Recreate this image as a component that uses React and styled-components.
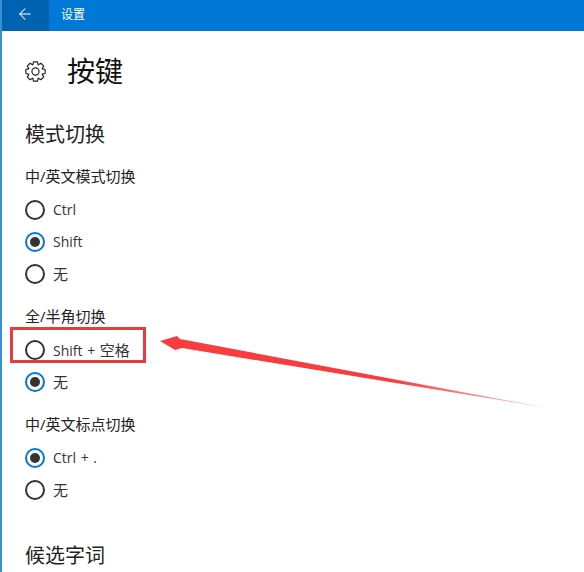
import styled, { createGlobalStyle } from "styled-components";
import { ArrowLeft } from "lucide-react";

const GlobalStyle = createGlobalStyle`
  html, body {
    margin: 0;
    height: 100%;
    overflow: hidden;
    background: #fff;
  }
`;

const Window = styled.div`
  position: relative;
  width: 584px;
  height: 572px;
  box-sizing: border-box;
  border-left: 2px solid #3a8fd1;
  overflow: hidden;
  font-family: "Open Sans", "Noto Sans CJK SC", sans-serif;
  color: #1a1a1a;
  background: #fff;
`;

const TitleBar = styled.header`
  display: flex;
  align-items: center;
  height: 31px;
  margin-left: -2px;
  background: #0078d7;
  color: #fff;
`;

const BackButton = styled.div`
  display: flex;
  align-items: center;
  justify-content: center;
  width: 49px;
  height: 100%;
  padding-bottom: 3px;
  box-sizing: border-box;
  background: #0063b1;
`;

const AppName = styled.span`
  margin-left: 12px;
  padding-bottom: 3px;
  font-size: 12px;
`;

const Content = styled.main`
  padding: 0 0 0 23px;
`;

const PageHeader = styled.div`
  display: flex;
  align-items: center;
  height: 40px;
  margin-top: 20px;
  gap: 21px;
`;

const PageTitle = styled.h1`
  margin: 0;
  font-size: 28px;
  font-weight: 400;
  line-height: 40px;
  color: #111;
`;

const SectionTitle = styled.h2`
  margin: ${(p) => p.$top}px 0 0;
  font-size: 20px;
  font-weight: 400;
  line-height: 26px;
  color: #222;
`;

const Group = styled.div`
  margin-top: ${(p) => p.$top}px;
`;

const GroupLabel = styled.div`
  font-size: 15px;
  line-height: 20px;
  margin-bottom: 8px;
  color: #222;
`;

const Row = styled.label`
  position: relative;
  display: flex;
  align-items: center;
  gap: 8px;
  height: 32px;
  font-size: 14px;
  word-spacing: 1px;
  color: #333;
`;

const RowText = styled.span`
  padding-bottom: 2px;
`;

const Cjk = styled.span`
  font-size: 15px;
`;

const Radio = styled.span`
  box-sizing: border-box;
  display: flex;
  align-items: center;
  justify-content: center;
  width: 20px;
  height: 20px;
  border-radius: 50%;
  border: 2px solid ${(p) => (p.$checked ? "#0078d7" : "#333")};

  &::after {
    content: "";
    display: ${(p) => (p.$checked ? "block" : "none")};
    width: 10px;
    height: 10px;
    border-radius: 50%;
    background: #333;
  }
`;

const Highlight = styled.span`
  position: absolute;
  left: -15px;
  top: -7px;
  width: 136px;
  height: 36px;
  box-sizing: border-box;
  border: 3px solid #ea3a3f;
`;

const ArrowOverlay = styled.svg`
  position: absolute;
  left: -2px;
  top: 0;
  pointer-events: none;
`;

// 8-tooth outline like the Windows settings gear
function gearPath() {
  const pts = [];
  for (let i = 0; i < 8; i++) {
    const a = (i * Math.PI) / 4 - Math.PI / 8;
    const step = Math.PI / 4;
    [
      [6.9, a + step * 0.02],
      [9.4, a + step * 0.24],
      [9.4, a + step * 0.76],
      [6.9, a + step * 0.98],
    ].forEach(([r, t]) => {
      pts.push(`${(10 + r * Math.cos(t)).toFixed(2)} ${(10 + r * Math.sin(t)).toFixed(2)}`);
    });
  }
  return `M${pts.join(" L")} Z`;
}

const groups = [
  { label: "中/英文模式切换", top: 18, options: [["Ctrl"], ["Shift", true], [<Cjk>无</Cjk>]] },
  {
    label: "全/半角切换",
    top: 16,
    options: [[<>Shift + <Cjk>空格</Cjk></>, false, true], [<Cjk>无</Cjk>, true]],
  },
  { label: "中/英文标点切换", top: 16, options: [["Ctrl + .", true], [<Cjk>无</Cjk>]] },
];

export default function App() {
  return (
    <Window>
      <GlobalStyle />
      <TitleBar>
        <BackButton>
          <ArrowLeft size={18} strokeWidth={1.4} />
        </BackButton>
        <AppName>设置</AppName>
      </TitleBar>
      <Content>
        <PageHeader>
          <svg width="21" height="21" viewBox="0 0 20 20" fill="none" stroke="#222" strokeWidth="1.1">
            <path d={gearPath()} strokeLinejoin="round" />
            <circle cx="10" cy="10" r="3.4" />
          </svg>
          <PageTitle>按键</PageTitle>
        </PageHeader>
        <SectionTitle $top={31}>模式切换</SectionTitle>
        {groups.map((g) => (
          <Group key={g.label} $top={g.top}>
            <GroupLabel>{g.label}</GroupLabel>
            {g.options.map(([text, checked, marked], i) => (
              <Row key={i}>
                <Radio $checked={checked} />
                <RowText>{text}</RowText>
                {marked ? <Highlight /> : null}
              </Row>
            ))}
          </Group>
        ))}
        <SectionTitle $top={37}>候选字词</SectionTitle>
      </Content>
      <ArrowOverlay width="584" height="572" viewBox="0 0 584 572">
        <defs>
          <linearGradient id="tail" gradientUnits="userSpaceOnUse" x1="160" y1="341" x2="548" y2="408">
            <stop offset="0.6" stopColor="#f93c3e" />
            <stop offset="1" stopColor="#f93c3e" stopOpacity="0.25" />
          </linearGradient>
        </defs>
        <path d="M160 341 L177 336 L180 339 L548 408 L182 348 L175 350 Z" fill="url(#tail)" />
      </ArrowOverlay>
    </Window>
  );
}
